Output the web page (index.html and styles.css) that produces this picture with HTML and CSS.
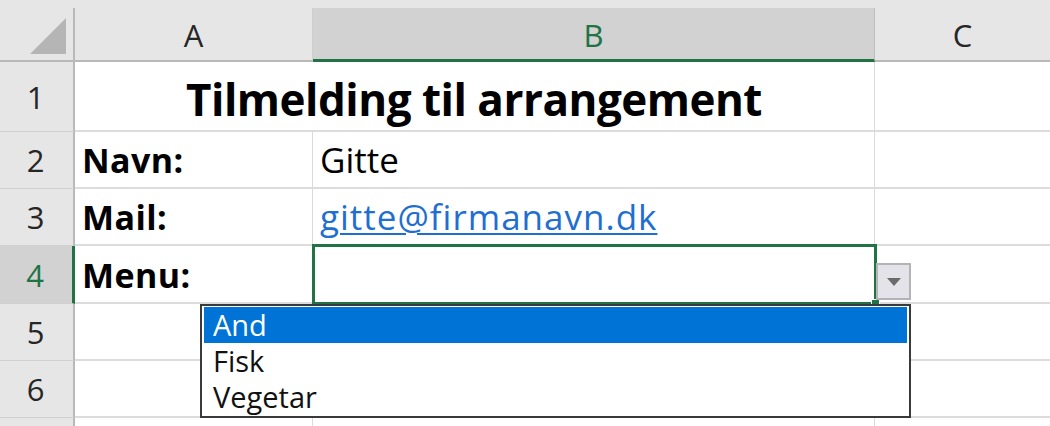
FILE: index.html
```html
<!DOCTYPE html>
<html lang="da">
<head>
<meta charset="utf-8">
<title>Tilmelding til arrangement</title>
<link rel="stylesheet" href="styles.css">
</head>
<body>
<div class="sheet">
  <div class="grid">
    <div class="corner"><span class="tri"></span></div>
    <div class="colhead">A</div>
    <div class="colhead sel">B</div>
    <div class="colhead last">C</div>

    <div class="rowhead r1">1</div>
    <div class="cell title">Tilmelding til arrangement</div>
    <div class="cell last"></div>

    <div class="rowhead">2</div>
    <div class="cell label">Navn:</div>
    <div class="cell">Gitte</div>
    <div class="cell last"></div>

    <div class="rowhead">3</div>
    <div class="cell label">Mail:</div>
    <div class="cell"><a class="link" href="#">gitte@firmanavn.dk</a></div>
    <div class="cell last"></div>

    <div class="rowhead sel">4</div>
    <div class="cell label">Menu:</div>
    <div class="cell"></div>
    <div class="cell last"></div>

    <div class="rowhead">5</div>
    <div class="cell"></div>
    <div class="cell"></div>
    <div class="cell last"></div>

    <div class="rowhead">6</div>
    <div class="cell"></div>
    <div class="cell"></div>
    <div class="cell last"></div>

    <div class="rowhead"></div>
    <div class="cell"></div>
    <div class="cell"></div>
    <div class="cell last"></div>
  </div>

  <div class="selection"><span class="handle"></span></div>
  <div class="ddbutton"><svg width="14" height="8" viewBox="0 0 14 8"><path d="M0 0 H14 L7 8 Z" fill="#6b6b6b"/></svg></div>
  <ul class="ddlist">
    <li class="active">And</li>
    <li>Fisk</li>
    <li>Vegetar</li>
  </ul>
</div>
</body>
</html>
```

FILE: styles.css
```css
* { box-sizing: border-box; }
html, body { margin: 0; padding: 0; }
body {
  width: 1050px;
  height: 426px;
  overflow: hidden;
  background: #ffffff;
  font-family: "Open Sans", Lato, "Liberation Sans", sans-serif;
  color: #000;
}
.sheet {
  position: relative;
  width: 1050px;
  height: 426px;
  overflow: hidden;
  background: #e6e6e6;
  padding-top: 8px;
}
.grid {
  display: grid;
  grid-template-columns: 75px 238px 562px 175px;
  grid-template-rows: 54px 70px 57px 57px 58px 57px 57px 40px;
  background: #ffffff;
}
.corner {
  background: #e6e6e6;
  border-right: 2px solid #b9b9b9;
  border-bottom: 2px solid #b9b9b9;
  position: relative;
}
.tri {
  position: absolute;
  right: 7px;
  bottom: 6px;
  width: 0;
  height: 0;
  border-left: 36px solid transparent;
  border-bottom: 36px solid #b5b5b5;
}
.colhead {
  background: #e6e6e6;
  border-right: 1px solid #cfcfcf;
  border-bottom: 2px solid #b9b9b9;
  display: flex;
  align-items: center;
  justify-content: center;
  font-size: 31px;
  color: #262626;
  padding-top: 2px;
}
.colhead.sel {
  background: #d2d2d2;
  color: #217346;
  border-bottom: 3px solid #217346;
  border-right: 1px solid #bdbdbd;
}
.colhead.last { border-right: none; }
.rowhead {
  background: #e6e6e6;
  border-right: 2px solid #b9b9b9;
  border-bottom: 1px solid #d0d0d0;
  display: flex;
  align-items: center;
  justify-content: center;
  font-size: 31px;
  color: #262626;
  padding-right: 2px;
}
.rowhead.sel {
  background: #d2d2d2;
  color: #217346;
  border-right: 3px solid #217346;
}
.cell {
  border-right: 1px solid #dadada;
  border-bottom: 2px solid #dcdcdc;
  display: flex;
  align-items: flex-end;
  padding: 0 8px 5px 7px;
  font-size: 35px;
  line-height: 1.3;
  white-space: nowrap;
}
.cell.last { border-right: none; }
.title {
  grid-column: 2 / span 2;
  justify-content: center;
  font-weight: 700;
  font-size: 44px;
  letter-spacing: -0.5px;
  padding-bottom: 2px;
}
.label { font-weight: 700; font-size: 34px; letter-spacing: 0.4px; }
.link {
  color: #1f6fd1;
  text-decoration: underline;
  text-decoration-thickness: 2px;
  text-underline-offset: 3px;
  letter-spacing: 1px;
}
.selection {
  position: absolute;
  left: 312px;
  top: 244px;
  width: 565px;
  height: 61px;
  border: 3px solid #217346;
}
.handle {
  position: absolute;
  right: -6px;
  bottom: -6px;
  width: 9px;
  height: 9px;
  background: #217346;
  border: 1px solid #ffffff;
}
.ddbutton {
  position: absolute;
  left: 876px;
  top: 263px;
  width: 35px;
  height: 37px;
  background: #e3e3e9;
  border: 2px solid #b3b3b8;
  display: flex;
  align-items: center;
  justify-content: center;
}
.ddlist {
  position: absolute;
  left: 200px;
  top: 304px;
  width: 711px;
  height: 114px;
  margin: 0;
  padding: 1px 2px;
  list-style: none;
  background: #ffffff;
  border: 2px solid #3a3a3a;
  font-size: 29px;
  line-height: 36px;
}
.ddlist li {
  padding-left: 9px;
  height: 36px;
  color: #111;
}
.ddlist li.active {
  background: #0074d6;
  color: #ffffff;
}
```
